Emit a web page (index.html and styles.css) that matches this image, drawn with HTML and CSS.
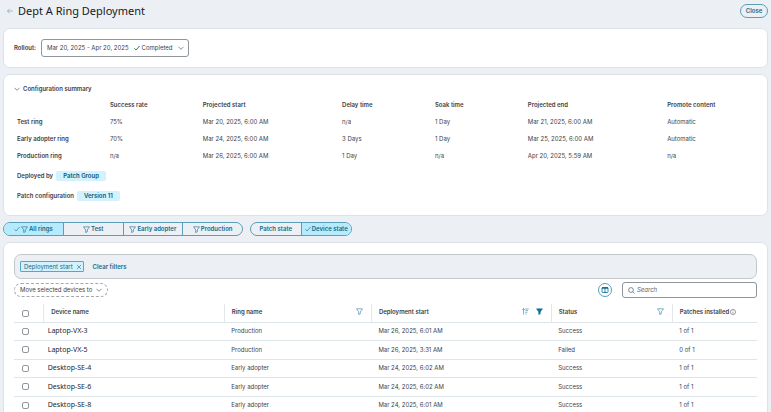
FILE: index.html
```
<!DOCTYPE html>
<html lang="en">
<head>
    <meta charset="UTF-8">
    <meta name="viewport" content="width=device-width, initial-scale=1.0">
    <title>Dept A Ring Deployment</title>
    <link rel="stylesheet" href="styles.css">
</head>
<body>
    <!-- Shared icons -->
    <svg class="sprite" aria-hidden="true">
        <symbol id="chevron" viewBox="0 0 6 6"><path d="M.5 1.800 3 4.300l2.500-2.500"/></symbol>
        <symbol id="check" viewBox="0 0 6 6"><path d="M.4 3.300 2.100 5 5.700.9"/></symbol>
        <symbol id="funnel" viewBox="0 0 7 7"><path d="M.5.8h6L4.300 3.900v1.900l-1.600.7V3.900z"/></symbol>
        <symbol id="cross" viewBox="0 0 6 6"><path d="M1 1l4 4M5 1 1 5"/></symbol>
    </svg>

    <header class="page-header">
        <a href="#" class="back" aria-label="Back">
            <svg class="icon" viewBox="0 0 6 6"><path d="M5.800 3H.5M2.700.8.5 3l2.200 2.200"/></svg>
        </a>
        <h1>Dept A Ring Deployment</h1>
        <button class="pill close">Close</button>
    </header>

    <section class="card rollout">
        <span class="label" id="rolloutLabel">Rollout:</span>
        <button class="rollout-select" aria-labelledby="rolloutLabel rolloutValue">
            <span id="rolloutValue">Mar 20, 2025 - Apr 20, 2025</span>
            <span class="state"><svg class="icon green"><use href="#check"/></svg>Completed</span>
            <svg class="icon"><use href="#chevron"/></svg>
        </button>
    </section>

    <section class="card summary">
        <button class="summary-toggle">
            <svg class="icon"><use href="#chevron"/></svg>
            Configuration summary
        </button>
        <table class="config">
            <colgroup>
                <col class="narrow"><col class="narrow"><col class="wide"><col class="narrow"><col class="narrow"><col class="wide"><col class="narrow">
            </colgroup>
            <thead>
                <tr><td></td><th>Success rate</th><th>Projected start</th><th>Delay time</th><th>Soak time</th><th>Projected end</th><th>Promote content</th></tr>
            </thead>
            <tbody>
                <tr><th>Test ring</th><td>75%</td><td>Mar 20, 2025, 6:00 AM</td><td>n/a</td><td>1 Day</td><td>Mar 21, 2025, 6:00 AM</td><td>Automatic</td></tr>
                <tr><th>Early adopter ring</th><td>70%</td><td>Mar 24, 2025, 6:00 AM</td><td>3 Days</td><td>1 Day</td><td>Mar 25, 2025, 6:00 AM</td><td>Automatic</td></tr>
                <tr><th>Production ring</th><td>n/a</td><td>Mar 26, 2025, 6:00 AM</td><td>1 Day</td><td>n/a</td><td>Apr 20, 2025, 5:59 AM</td><td>n/a</td></tr>
            </tbody>
        </table>
        <div class="meta"><span class="label">Deployed by</span><a href="#" class="tag">Patch Group</a></div>
        <div class="meta"><span class="label">Patch configuration</span><a href="#" class="tag">Version 11</a></div>
    </section>

    <div class="switches">
        <div class="segments rings">
            <button class="active"><svg class="icon"><use href="#check"/></svg><svg class="icon funnel"><use href="#funnel"/></svg>All rings</button>
            <button><svg class="icon funnel"><use href="#funnel"/></svg>Test</button>
            <button><svg class="icon funnel"><use href="#funnel"/></svg>Early adopter</button>
            <button><svg class="icon funnel"><use href="#funnel"/></svg>Production</button>
        </div>
        <div class="segments states">
            <button>Patch state</button>
            <button class="active"><svg class="icon"><use href="#check"/></svg>Device state</button>
        </div>
    </div>

    <section class="card devices">
        <div class="filter-bar">
            <button class="filter-chip">Deployment start <svg class="icon"><use href="#cross"/></svg></button>
            <button class="clear">Clear filters</button>
        </div>
        <div class="toolbar">
            <button class="move">Move selected devices to <svg class="icon"><use href="#chevron"/></svg></button>
            <button class="columns" aria-label="Columns">
                <svg viewBox="0 0 8 8"><rect x="1" y="1.500" width="6" height="5" rx=".6"/><path d="M4 2v4.500"/><path class="bar" d="M1 2h6"/></svg>
            </button>
            <label class="search">
                <svg class="icon funnel" viewBox="0 0 7 7"><circle cx="3" cy="3" r="2.400"/><path d="M4.800 4.800 6.700 6.700"/></svg>
                <input type="text" placeholder="Search" aria-label="Search">
            </label>
        </div>
        <table class="grid">
            <colgroup>
                <col class="c-check"><col class="c-name"><col class="c-ring"><col class="c-start"><col class="c-status"><col class="c-patches">
            </colgroup>
            <thead>
                <tr>
                    <th class="pick"><input type="checkbox" aria-label="Select all"></th>
                    <th>Device name</th>
                    <th><div class="head">Ring name <svg class="icon funnel blue"><use href="#funnel"/></svg></div></th>
                    <th><div class="head">Deployment start
                        <span class="head-icons">
                            <svg class="icon funnel blue" viewBox="0 0 7 7"><path d="M1.500 6.500v-6M.2 1.900 1.500.6l1.300 1.300M3.300 1h3.500M3.300 2.700h2.700M3.300 4.400h1.900M3.300 6.100h1"/></svg>
                            <svg class="icon funnel blue solid"><use href="#funnel"/></svg>
                        </span></div></th>
                    <th><div class="head">Status <svg class="icon funnel blue"><use href="#funnel"/></svg></div></th>
                    <th><div class="head info">Patches installed <svg class="icon" viewBox="0 0 7 7"><circle cx="3.500" cy="3.500" r="3"/><path d="M3.500 3.200v2M3.500 1.700v.8"/></svg></div></th>
                </tr>
            </thead>
            <tbody>
                <tr><td class="pick"><input type="checkbox" aria-label="Laptop-VX-3"></td><td class="name">Laptop-VX-3</td><td>Production</td><td>Mar 26, 2025, 6:01 AM</td><td>Success</td><td>1 of 1</td></tr>
                <tr><td class="pick"><input type="checkbox" aria-label="Laptop-VX-5"></td><td class="name">Laptop-VX-5</td><td>Production</td><td>Mar 26, 2025, 3:31 AM</td><td>Failed</td><td>0 of 1</td></tr>
                <tr><td class="pick"><input type="checkbox" aria-label="Desktop-SE-4"></td><td class="name">Desktop-SE-4</td><td>Early adopter</td><td>Mar 24, 2025, 6:02 AM</td><td>Success</td><td>1 of 1</td></tr>
                <tr><td class="pick"><input type="checkbox" aria-label="Desktop-SE-6"></td><td class="name">Desktop-SE-6</td><td>Early adopter</td><td>Mar 24, 2025, 6:02 AM</td><td>Success</td><td>1 of 1</td></tr>
                <tr><td class="pick"><input type="checkbox" aria-label="Desktop-SE-8"></td><td class="name">Desktop-SE-8</td><td>Early adopter</td><td>Mar 24, 2025, 6:01 AM</td><td>Success</td><td>1 of 1</td></tr>
            </tbody>
        </table>
    </section>
</body>
</html>
```
FILE: styles.css
```
* {
    box-sizing: border-box;
}
body {
    margin: 0;
    padding: 0 3px;
    height: 100vh;
    overflow: hidden;
    background-color: #ecf0f4;
    color: #3c4148;
    font-family: Inter, sans-serif;
    font-size: 6px;
    line-height: 8px;
}
button, input {
    font: inherit;
    color: inherit;
}
button {
    display: flex;
    align-items: center;
    justify-content: center;
    padding: 0;
    border: none;
    background: none;
    white-space: nowrap;
    cursor: pointer;
}
a {
    text-decoration: none;
}
table {
    width: 100%;
    border-collapse: collapse;
    table-layout: fixed;
}
th, td {
    padding: 0;
    text-align: left;
    white-space: nowrap;
}
th, .label {
    font-weight: 600;
}
.sprite {
    display: none;
}
.icon {
    flex: none;
    width: 6px;
    height: 6px;
    fill: none;
    stroke: currentColor;
    stroke-width: 0.6;
}
.icon.funnel {
    width: 7px;
    height: 7px;
}
.icon.green {
    color: #1b8745;
    stroke-width: 1;
}
.blue {
    color: #2a7da0;
}
.icon.solid {
    fill: #086f97;
}

/* Header */
.page-header {
    display: flex;
    align-items: center;
    height: 22px;
    padding: 0 0 0 4px;
    margin-bottom: 6px;
}
.back {
    display: flex;
    margin-right: 5px;
    color: #6797ac;
}
h1 {
    margin: 0;
    color: #15191e;
    font-family: "Noto Sans", sans-serif;
    font-size: 11px;
    font-weight: 400;
    line-height: 16px;
}
.close {
    width: 28px;
    height: 14px;
    margin-left: auto;
    border: 1px solid #5c9db8;
    border-radius: 7px;
    color: #14698a;
    font-weight: 600;
}

/* Cards */
.card {
    background-color: #fff;
    border: 1px solid #dbe3e9;
    border-radius: 7px;
}
.rollout {
    display: flex;
    align-items: center;
    height: 40px;
    padding: 0 10px;
    gap: 5px;
    margin-bottom: 6px;
}
.rollout-select {
    height: 18px;
    padding: 0 4px 0 5px;
    gap: 5px;
    border: 1px solid #8f9599;
    border-radius: 3px;
}
.state {
    display: flex;
    align-items: center;
    gap: 2px;
}
.summary {
    height: 142px;
    padding: 10px 7px 0 10px;
}
.summary-toggle {
    gap: 3px;
    height: 8px;
    margin-bottom: 3px;
    font-weight: 600;
}
.config {
    width: calc(100% - 3px);
    margin-left: 3px;
}
.config tr {
    height: 17px;
}
.narrow {
    width: 12.5%;
}
.wide {
    width: 18.75%;
}
.meta {
    display: flex;
    align-items: center;
    gap: 3px;
    height: 20px;
    margin-left: 3px;
}
.config + .meta {
    margin-top: 2px;
}
.tag {
    padding: 1px 7px;
    border-radius: 2px;
    background-color: #d3f2fd;
    color: #075a78;
    font-weight: 600;
}

/* Segmented switches */
.switches {
    display: flex;
    gap: 7px;
    margin: 6px 0;
}
.segments {
    display: flex;
    height: 14px;
    overflow: hidden;
    border: 1px solid #5c9db8;
    border-radius: 7px;
}
.segments button {
    gap: 1px;
    color: #14698a;
    font-weight: 600;
}
.segments button + button {
    border-left: 1px solid #5c9db8;
}
.rings {
    width: 240px;
}
.rings button {
    flex: 1;
}
.states {
    width: 102px;
}
.states button {
    flex: 1;
}
.segments .active {
    background-color: #b5ebfd;
}

/* Devices */
.devices {
    padding: 11px 10px;
}
.filter-bar {
    display: flex;
    align-items: center;
    gap: 9px;
    height: 25px;
    padding: 0 5px;
    background-color: #ecf0f4;
    border: 1px solid #c3c8cc;
    border-radius: 7px;
}
.filter-chip {
    gap: 3px;
    height: 11px;
    padding: 0 1px 0 3px;
    border: 1px solid #5aa6c2;
    border-radius: 1px;
    background-color: #d3f2fd;
    color: #14698a;
}
.clear {
    color: #14698a;
    font-weight: 600;
}
.toolbar {
    display: flex;
    align-items: center;
    gap: 10px;
    height: 16px;
    margin: 3px 0 6px;
}
.move {
    gap: 4px;
    height: 14px;
    margin-right: auto;
    padding: 0 5px;
    border: 1px dashed #a3a8ac;
    border-radius: 7px;
}
.columns {
    width: 14px;
    height: 14px;
    border: 1px solid #5c9db8;
    border-radius: 50%;
}
.columns svg {
    flex: none;
    width: 8px;
    height: 8px;
    fill: none;
    stroke: #08648a;
    stroke-width: 0.8;
}
.columns .bar {
    stroke-width: 1.4;
}
.search {
    display: flex;
    align-items: center;
    gap: 2px;
    width: 135px;
    height: 16px;
    padding: 0 5px;
    border: 1px solid #8f9599;
    border-radius: 3px;
}
.search input {
    flex: 1;
    min-width: 0;
    padding: 0;
    border: none;
    outline: none;
    background: none;
}
.search input::placeholder {
    color: #5d6369;
    font-style: italic;
}
.grid tr {
    height: 18px;
    border-bottom: 1px solid #dde5e9;
}
.grid tbody tr:nth-child(even) {
    height: 19px;
}
.grid th, .grid td {
    padding-left: 7px;
}
.grid th {
    padding-bottom: 2px;
}
.grid th + th {
    border-left: 1px solid #e2e7ea;
}
.grid .pick {
    padding: 0 0 0 8px;
}
.grid th.pick {
    padding-top: 2px;
}
.grid .name {
    padding-left: 4px;
    color: #22262b;
    font-family: "Noto Sans", sans-serif;
    font-size: 7px;
}
.pick input {
    display: block;
    appearance: none;
    width: 7px;
    height: 7px;
    margin: 0;
    border: 1px solid #91979c;
    border-radius: 2px;
}
.pick input:checked {
    background-color: #14698a;
}
.c-check {
    width: 4%;
}
.c-name {
    width: 24.3%;
}
.c-ring {
    width: 19.8%;
}
.c-start {
    width: 24.2%;
}
.c-status {
    width: 16.3%;
}
.head {
    display: flex;
    align-items: center;
    justify-content: space-between;
    padding-right: 8px;
}
.head-icons {
    display: flex;
    gap: 7px;
}
.head.info {
    justify-content: flex-start;
    gap: 1px;
}
```
